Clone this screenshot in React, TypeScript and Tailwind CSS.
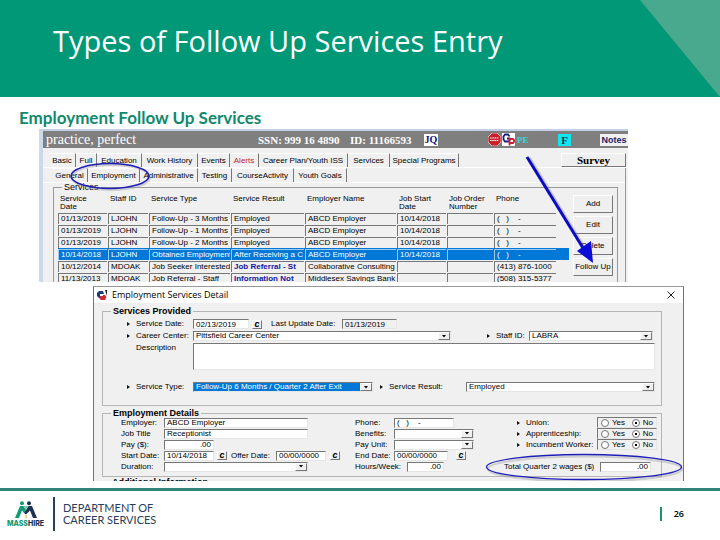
import { useState } from 'react';
import type { ReactNode } from 'react';

const TOP_TABS = [
  { name: 'Basic', width: 'w-[27px]' },
  { name: 'Full', width: 'w-[21px]' },
  { name: 'Education', width: 'w-[45px]' },
  { name: 'Work History', width: 'w-[56px]' },
  { name: 'Events', width: 'w-[32px]' },
  { name: 'Alerts', width: 'w-[29px]' },
  { name: 'Career Plan/Youth ISS', width: 'w-[89px]' },
  { name: 'Services', width: 'w-[42px]' },
  { name: 'Special Programs', width: 'w-[69px]' },
];

const SUB_TABS = [
  { name: 'General', width: 'w-[36px]' },
  { name: 'Employment', width: 'w-[52px]' },
  { name: 'Administrative', width: 'w-[58px]' },
  { name: 'Testing', width: 'w-[34px]' },
  { name: 'CourseActivity', width: 'w-[62px]' },
  { name: 'Youth Goals', width: 'w-[53px]' },
];

const COLUMNS = [
  { name: 'Service Date', width: 'w-[50px]' },
  { name: 'Staff ID', width: 'w-[41px]' },
  { name: 'Service Type', width: 'w-[82px]' },
  { name: 'Service Result', width: 'w-[74px]' },
  { name: 'Employer Name', width: 'w-auto' },
  { name: 'Job Start Date', width: 'w-[50px]' },
  { name: 'Job Order Number', width: 'w-[47px]' },
  { name: 'Phone', width: 'w-[75px]' },
];

const SERVICES = [
  ['01/13/2019', 'LJOHN', 'Follow-Up - 3 Months', 'Employed', 'ABCD Employer', '10/14/2018', '', '(   )    -'],
  ['01/13/2019', 'LJOHN', 'Follow-Up - 1 Months', 'Employed', 'ABCD Employer', '10/14/2018', '', '(   )    -'],
  ['01/13/2019', 'LJOHN', 'Follow-Up - 2 Months', 'Employed', 'ABCD Employer', '10/14/2018', '', '(   )    -'],
  ['10/14/2018', 'LJOHN', 'Obtained Employment', 'After Receiving a C', 'ABCD Employer', '10/14/2018', '', '(   )    -'],
  ['10/12/2014', 'MDOAK', 'Job Seeker Interested', 'Job Referral - St', 'Collaborative Consulting', '', '', '(413) 876-1000'],
  ['11/13/2013', 'MDOAK', 'Job Referral - Staff', 'Information Not', 'Middlesex Savings Bank', '', '', '(508) 315-5377'],
];

const SELECTED_ROW = 3;

const sunken = 'border border-t-[#777] border-l-[#777] border-r-[#e6e6e6] border-b-[#e6e6e6]';
const raised = 'border border-t-white border-l-white border-r-[#777] border-b-[#777] bg-[#efefef]';

function Marker() {
  return (
    <svg viewBox="0 0 4 6" className="h-1.5 w-1 shrink-0" aria-hidden="true">
      <path d="M0 1 3 3 0 5z" fill="#111" />
    </svg>
  );
}

function Label({ id, width, marked, children }: { id: string; width: string; marked?: boolean; children: ReactNode }) {
  return (
    <label htmlFor={id} className={`flex shrink-0 items-center gap-[5px] whitespace-nowrap ${width}`}>
      {marked && <Marker />}
      {children}
    </label>
  );
}

function TextBox({ id, value, width, right, grey }: { id: string; value: string; width: string; right?: boolean; grey?: boolean }) {
  return (
    <input
      id={id}
      type="text"
      defaultValue={value}
      className={`h-2.5 min-w-0 px-0.5 leading-2 ${sunken} ${width} ${right ? 'text-right' : ''} ${grey ? 'bg-[#f0f0f0]' : 'bg-white'}`}
    />
  );
}

function DropDown({ id, value, width, highlighted }: { id: string; value: string; width: string; highlighted?: boolean }) {
  return (
    <div className={`relative h-2.5 bg-white pr-3 ${sunken} ${width}`}>
      <select
        id={id}
        className={`block h-2 w-full appearance-none px-0.5 leading-2 ${highlighted ? 'bg-[#0078d7] text-white' : 'bg-white'}`}
      >
        <option>{value}</option>
      </select>
      <span className={`pointer-events-none absolute top-0 right-0 flex h-2 w-3 items-center justify-center ${raised}`}>
        <svg viewBox="0 0 6 3" className="h-[3px] w-1.5">
          <path d="M1 0h4L3 2.500z" fill="#000" />
        </svg>
      </span>
    </div>
  );
}

function CalendarButton({ label }: { label: string }) {
  return (
    <button
      aria-label={label}
      className={`flex h-[9px] w-[10px] shrink-0 items-center justify-center text-[9px] leading-[7px] font-bold italic ${raised}`}
    >
      c
    </button>
  );
}

function YesNo({ name, label }: { name: string; label: string }) {
  const [answer, setAnswer] = useState('No');
  return (
    <div className="flex h-[11px] items-center" role="radiogroup" aria-label={label}>
      <span className="flex w-20 shrink-0 items-center gap-[5px] whitespace-nowrap">
        <Marker />
        {label}
      </span>
      <span className={`flex h-[11px] w-[60px] shrink-0 items-center justify-between px-[3px] ${sunken}`}>
        {['Yes', 'No'].map((option) => (
          <label key={option} className="flex items-center gap-[3px]">
            <input
              type="radio"
              name={name}
              checked={answer === option}
              onChange={() => setAnswer(option)}
              className="h-2 w-2 appearance-none rounded-full border border-[#777] bg-white checked:bg-[radial-gradient(circle,#000_30%,#fff_36%)]"
            />
            {option}
          </label>
        ))}
      </span>
    </div>
  );
}

function Tabs({ tabs, active }: { tabs: typeof TOP_TABS; active: string }) {
  return (
    <div className="flex" role="tablist">
      {tabs.map((tab) => (
        <button
          key={tab.name}
          role="tab"
          aria-selected={tab.name === active}
          className={`h-3.5 border-t border-r border-t-white border-r-[#777] text-center leading-3 whitespace-nowrap ${tab.width} ${
            tab.name === 'Alerts' ? 'text-[#c41d2b]' : ''
          }`}
        >
          {tab.name}
        </button>
      ))}
    </div>
  );
}

function ServicesTable() {
  return (
    <table className="w-full table-fixed border-collapse text-left">
      <colgroup>
        {COLUMNS.map((column) => (
          <col key={column.name} className={column.width} />
        ))}
      </colgroup>
      <thead>
        <tr className="h-[17px] align-top">
          {COLUMNS.map((column) => (
            <th key={column.name} className="p-0 pr-2 pl-0.5 leading-2 font-normal">
              {column.name === 'Phone' || column.name.startsWith('Job') ? (
                column.name
              ) : (
                <span className={column.name === 'Service Date' ? '' : 'whitespace-nowrap'}>{column.name}</span>
              )}
            </th>
          ))}
        </tr>
      </thead>
      <tbody>
        {SERVICES.map((row, index) => (
          <tr key={index} className={index === SELECTED_ROW ? 'bg-[#0078d7] text-white' : ''}>
            {row.map((cell, column) => (
              <td key={column} className="h-3 p-0">
                <div
                  className={`mr-px h-[11px] overflow-hidden border-t border-l pl-0.5 leading-[10px] whitespace-pre ${
                    index === SELECTED_ROW ? 'border-[#9cc9ee]' : 'border-[#777]'
                  } ${column === 7 ? 'w-[62px]' : ''} ${column === 3 && index > SELECTED_ROW ? 'font-bold text-[#1515a0]' : ''}`}
                >
                  {cell}
                </div>
              </td>
            ))}
          </tr>
        ))}
      </tbody>
    </table>
  );
}

function CaseWindow() {
  return (
    <section className="relative mr-[92px] ml-[39px] max-h-[153px] overflow-hidden border-t-2 border-l-4 border-t-[#c3cfe4] border-l-[#cbd9eb] bg-[#f0f0f0]">
      <div className="flex h-[17px] items-center bg-[#7f7f7f] pl-[3px] font-['Liberation_Serif',serif] text-white">
        <span className="w-[212px] text-[14px] leading-4">practice, perfect</span>
        <span className="w-[92px] text-[11px] font-bold whitespace-nowrap">SSN: 999 16 4890</span>
        <span className="w-[74px] text-[11px] font-bold whitespace-nowrap">ID: 11166593</span>
        <button className="h-3 w-3.5 bg-white text-[10px] leading-3 font-bold text-[#10107a]">JQ</button>
        <span className="ml-auto flex items-center">
          <svg viewBox="0 0 13 13" className="h-[13px] w-[13px]" aria-label="Stop">
            <path d="M4 0h5l4 4v5l-4 4H4L0 9V4z" fill="#c9202b" stroke="#fff" strokeWidth=".6" />
            <path d="M2 5h9M2 7.5h9" stroke="#fff" strokeWidth="1.2" strokeDasharray="1.6 .6" />
          </svg>
          <svg viewBox="0 0 13 13" className="ml-px h-[13px] w-[13px]" aria-label="Career plan">
            <path d="M0 0h13v13H0z" fill="#fff" />
            <path d="M7.500 3.500 6 1.500H3L1.500 3.500v3L3 8.500h3l1.500-1V5.500H5" fill="none" stroke="#16237c" strokeWidth="1.8" />
            <path d="M7.500 12.500V6H11l1 1v2l-1 1H7.500" fill="none" stroke="#c9202b" strokeWidth="1.8" />
          </svg>
          <span className="ml-0.5 w-[41px] text-[9px] font-bold text-[#43d3dc]">PE</span>
          <button className="h-3 w-[13px] bg-[#17e5ee] text-[11px] leading-3 font-bold text-[#063c50]">F</button>
          <button className="ml-[29px] h-3 w-7 bg-[#f0f0f0] font-['Liberation_Sans',sans-serif] text-[9px] leading-3 font-bold text-[#1b1b66]">
            Notes
          </button>
        </span>
      </div>

      <div className="flex items-start border-b border-white pt-[5px] pl-1.5">
        <Tabs tabs={TOP_TABS} active="Services" />
        <button
          className={`mr-0.5 ml-auto h-3.5 w-[65px] font-['Liberation_Serif',serif] text-[11px] leading-3 font-bold ${raised}`}
        >
          Survey
        </button>
      </div>
      <div className="mr-0.5 border-r border-[#999]">
        <div className="border-b border-white pl-[9px]">
          <Tabs tabs={SUB_TABS} active="Employment" />
        </div>
        <fieldset className="mr-[7px] ml-2.5 min-w-0 border border-[#999] pl-1">
          <legend className="ml-1 px-0.5 text-[9px] leading-2">Services</legend>
          <div className="flex gap-1 pt-1 pr-1">
            <div className="min-w-0 flex-1">
              <ServicesTable />
            </div>
            <div className="flex w-10 shrink-0 flex-col gap-[3px]">
              {['Add', 'Edit', 'Delete', 'Follow Up'].map((action) => (
                <button key={action} className={`h-[18px] whitespace-nowrap ${raised}`}>
                  {action}
                </button>
              ))}
            </div>
          </div>
        </fieldset>
      </div>

      {/* Callouts drawn over the window */}
      <svg viewBox="0 0 82 30" className="absolute top-[30px] left-[26px] h-[30px] w-[82px]" aria-hidden="true">
        <ellipse cx="42" cy="16.5" rx="39" ry="12.5" fill="none" stroke="#999" strokeOpacity=".4" strokeWidth="2" />
        <ellipse cx="41" cy="15" rx="39" ry="12.5" fill="none" stroke="#1d1db8" strokeWidth="1.5" />
      </svg>
      <svg viewBox="0 0 74 112" className="absolute top-[23px] right-[30px] h-[112px] w-[74px]" aria-hidden="true">
        <path d="M5 4 60 94" stroke="#888" strokeOpacity=".4" strokeWidth="4" />
        <path d="M3 3 59 94" stroke="#0b0bc4" strokeWidth="3" />
        <path d="M69 109 53 97 67 87z" fill="#0b0bd8" />
      </svg>
    </section>
  );
}

function DetailWindow() {
  return (
    <section className="relative mt-1 mr-9 ml-[93px] overflow-hidden border-t border-r border-l border-t-[#999] border-r-[#3b84ad] border-l-[#2a86c4] bg-[#f0f0f0]">
      <div className="flex h-4 items-center bg-white pr-2 pl-0.5">
        <svg viewBox="0 0 11 11" className="h-[11px] w-[11px]" aria-hidden="true">
          <path d="M7 1H3L1 3v3l2 2h2V4h3z" fill="#1c3d7c" />
          <path d="M5 5h4l1.5 2L9 10H5L3 8z" fill="#cc2a35" />
          <path d="M4 4h3v2H4z" fill="#fff" />
          <path d="M9 0h2v6z" fill="#222" />
        </svg>
        <h2 className="ml-[5px] font-['Open_Sans',sans-serif] text-[9px]">Employment Services Detail</h2>
        <button aria-label="Close" className="ml-auto">
          <svg viewBox="0 0 8 8" className="h-2 w-2">
            <path d="M.5.5l7 7M7.5.5l-7 7" stroke="#222" strokeWidth="1" />
          </svg>
        </button>
      </div>

      <div className="pt-1 pr-[21px] pl-2">
        <fieldset className="min-w-0 border border-[#b5b5b5] pl-6">
          <legend className="-ml-4 px-0.5 text-[9px] leading-2 font-bold">Services Provided</legend>
          <div className="flex flex-col gap-0.5 pt-1 pr-2 pb-[13px]">
            <div className="flex h-2.5 items-center">
              <Label id="service-date" width="w-[66px]" marked>Service Date:</Label>
              <TextBox id="service-date" value="02/13/2019" width="w-14" />
              <span className="ml-[3px]">
                <CalendarButton label="Pick service date" />
              </span>
              <span className="ml-[9px]">
                <Label id="update-date" width="w-[71px]">Last Update Date:</Label>
              </span>
              <TextBox id="update-date" value="01/13/2019" width="w-[55px]" grey />
            </div>
            <div className="flex h-2.5 items-center">
              <Label id="career-center" width="w-[66px]" marked>Career Center:</Label>
              <DropDown id="career-center" value="Pittsfield Career Center" width="flex-1" />
              <span className="ml-9">
                <Label id="staff-id" width="w-[42px]" marked>Staff ID:</Label>
              </span>
              <DropDown id="staff-id" value="LABRA" width="w-[124px]" />
            </div>
            <div className="-mr-0.5 flex">
              <label htmlFor="description" className="w-[66px] shrink-0 pl-[9px] leading-[10px]">Description</label>
              <textarea id="description" className={`h-[27px] min-w-0 flex-1 resize-none bg-white ${sunken}`} />
            </div>
            <div className="-mr-0.5 flex h-5 items-center pt-2.5">
              <Label id="service-type" width="w-[66px]" marked>Service Type:</Label>
              <DropDown id="service-type" value="Follow-Up 6 Months / Quarter 2 After Exit" width="w-[180px]" highlighted />
              <span className="ml-[7px]">
                <Label id="service-result" width="w-[86px]" marked>Service Result:</Label>
              </span>
              <DropDown id="service-result" value="Employed" width="flex-1" />
            </div>
          </div>
        </fieldset>

        <fieldset className="mt-[3px] min-w-0 border border-[#b5b5b5] pr-1 pb-1 pl-[18px]">
          <legend className="-ml-2.5 px-0.5 text-[9px] leading-2 font-bold">Employment Details</legend>
          <div className="flex">
            <div className="grid auto-rows-[11px] items-center">
              <div className="flex items-center">
                <Label id="employer" width="w-[43px]">Employer:</Label>
                <TextBox id="employer" value="ABCD Employer" width="w-36" />
              </div>
              <div className="flex items-center">
                <Label id="job-title" width="w-[43px]">Job Title</Label>
                <TextBox id="job-title" value="Receptionist" width="w-36" />
              </div>
              <div className="flex items-center">
                <Label id="pay" width="w-[43px]">Pay ($):</Label>
                <TextBox id="pay" value=".00" width="w-[50px]" right />
              </div>
              <div className="flex items-center">
                <Label id="start-date" width="w-[43px]">Start Date:</Label>
                <TextBox id="start-date" value="10/14/2018" width="w-[50px]" />
                <span className="ml-[3px]">
                  <CalendarButton label="Pick start date" />
                </span>
                <span className="ml-1">
                  <Label id="offer-date" width="w-[45px]">Offer Date:</Label>
                </span>
                <TextBox id="offer-date" value="00/00/0000" width="w-[50px]" />
                <span className="ml-1">
                  <CalendarButton label="Pick offer date" />
                </span>
              </div>
              <div className="flex items-center">
                <Label id="duration" width="w-[43px]">Duration:</Label>
                <DropDown id="duration" value="" width="w-36" />
              </div>
            </div>
            <div className="ml-[15px] grid auto-rows-[11px] items-center">
              <div className="flex items-center">
                <Label id="phone" width="w-[39px]">Phone:</Label>
                <TextBox id="phone" value="(   )    -" width="w-[60px]" />
              </div>
              <div className="flex items-center">
                <Label id="benefits" width="w-[39px]">Benefits:</Label>
                <DropDown id="benefits" value="" width="w-20" />
              </div>
              <div className="flex items-center">
                <Label id="pay-unit" width="w-[39px]">Pay Unit:</Label>
                <DropDown id="pay-unit" value="" width="w-20" />
              </div>
              <div className="flex items-center">
                <Label id="end-date" width="w-[39px]">End Date:</Label>
                <TextBox id="end-date" value="00/00/0000" width="w-[54px]" />
                <span className="ml-2">
                  <CalendarButton label="Pick end date" />
                </span>
              </div>
              <div className="flex items-center">
                <Label id="hours" width="w-[52px]">Hours/Week:</Label>
                <TextBox id="hours" value=".00" width="w-[37px]" right />
              </div>
            </div>
            <div className="ml-auto grid auto-rows-[11px] items-center justify-items-end">
              <YesNo name="union" label="Union:" />
              <YesNo name="apprenticeship" label="Apprenticeship:" />
              <YesNo name="incumbent" label="Incumbent Worker:" />
              <div />
              <div className="flex items-center pr-1.5">
                <Label id="wages" width="w-24">Total Quarter 2 wages ($)</Label>
                <TextBox id="wages" value=".00" width="w-[51px]" right />
              </div>
            </div>
          </div>
        </fieldset>
        <div className="mt-px h-[3px] overflow-hidden pl-2.5 text-[9px] leading-[9px] font-bold">Additional Information</div>
      </div>

      <svg viewBox="0 0 200 28" className="absolute right-0 bottom-0 h-[28px] w-[200px]" aria-hidden="true">
        <ellipse cx="102" cy="16" rx="97" ry="12.5" fill="none" stroke="#999" strokeOpacity=".4" strokeWidth="2" />
        <ellipse cx="101" cy="14" rx="97.5" ry="12.5" fill="none" stroke="#1d1db8" strokeWidth="1.3" />
      </svg>
    </section>
  );
}

function MassHireLogo() {
  return (
    <div className="flex w-[39px] flex-col items-center">
      <svg viewBox="0 0 22 18" className="h-[18px] w-[22px]" aria-hidden="true">
        <circle cx="7" cy="2.3" r="2" fill="#159a76" />
        <circle cx="14" cy="2.3" r="2" fill="#1b3350" />
        <path d="M0 17 5 5h3.500L11 9 9 12 7 9.500 4 17z" fill="#159a76" />
        <path d="M22 17 17 5h-3.500L9 12l2 1.500 4-4L18 17z" fill="#1b3350" />
        <path d="M8.500 5h5L11 9z" fill="#7fc4b0" />
        <path d="M11 14v3.500" stroke="#e3a64a" strokeWidth="1" />
      </svg>
      <span className="font-['Inter',sans-serif] text-[7px] leading-[9px] font-extrabold text-[#1b3350]">
        <span className="text-[#159a76]">MASS</span>HIRE
      </span>
    </div>
  );
}

export default function App() {
  return (
    <main className="bg-white font-['Liberation_Sans',Arial,sans-serif] text-[8px] leading-[10px] text-black">
      <header className="relative flex h-[97px] items-center bg-[#009877] pb-4 pl-[53px]">
        <div className="absolute inset-y-0 right-0 w-20 bg-[#48a98f] [clip-path:polygon(0_0,100%_0,100%_100%)]" />
        <h1 className="font-['Open_Sans',sans-serif] text-[29px] leading-10 whitespace-nowrap text-white">
          Types of Follow Up Services Entry
        </h1>
      </header>

      <h2 className="pt-[11px] pb-px pl-[19px] font-['Lato',sans-serif] text-[17px] leading-5 font-bold text-[#10896c]">
        Employment Follow Up Services
      </h2>
      <CaseWindow />
      <DetailWindow />

      <footer className="mt-[7px] flex items-center border-t-[3px] border-[#2f8577] pt-1.5 pr-9 pl-1.5">
        <MassHireLogo />
        <div className="ml-2 h-[34px] w-0.5 bg-[#28405a]" />
        <p className="ml-2 font-['Lato',sans-serif] text-[11px] leading-3 text-[#28405a]">
          DEPARTMENT OF
          <br />
          CAREER SERVICES
        </p>
        <span className="ml-auto border-l-2 border-[#1f8f72] pl-3 font-['Open_Sans',sans-serif] text-[9px] leading-3.5 font-semibold">
          26
        </span>
      </footer>
    </main>
  );
}
